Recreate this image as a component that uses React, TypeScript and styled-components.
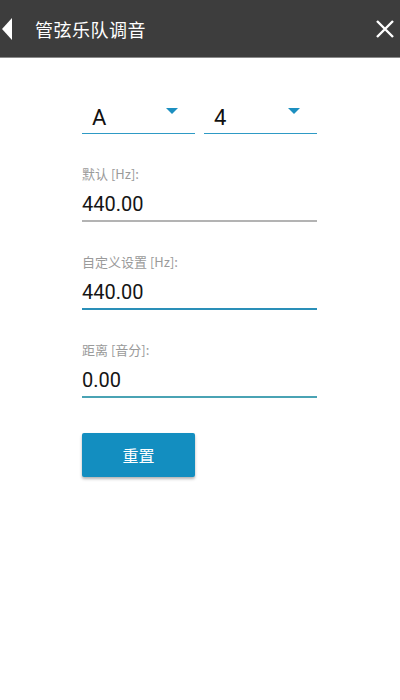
import styled, { createGlobalStyle } from 'styled-components';

const GlobalStyle = createGlobalStyle`
  html, body {
    margin: 0;
    padding: 0;
    background: #fff;
    font-family: Roboto, "Noto Sans CJK SC", sans-serif;
  }
  * {
    box-sizing: border-box;
  }
`;

const Page = styled.div`
  width: 400px;
  height: 700px;
  background: #fff;
`;

const Header = styled.div`
  height: 58px;
  background: #3d3d3d;
  border-bottom: 1px solid #8a8a8a;
  display: flex;
  align-items: center;
`;

const BackButton = styled.div`
  width: 35px;
  height: 58px;
  display: flex;
  align-items: center;
  padding-left: 2px;
`;

const Title = styled.h1`
  margin: 0;
  color: #fff;
  font-size: 18px;
  font-weight: 400;
  font-family: "Noto Sans CJK SC", sans-serif;
  letter-spacing: 0.5px;
  flex: 1;
`;

const CloseButton = styled.div`
  width: 22px;
  height: 58px;
  display: flex;
  align-items: center;
  margin-right: 2px;
`;

const Form = styled.div`
  width: 235px;
  margin: 46px 0 0 82px;
  display: flex;
  flex-direction: column;
`;

const SelectRow = styled.div`
  display: flex;
  gap: 9px;
`;

const Select = styled.div`
  flex: 1;
  height: 30px;
  border-bottom: 1px solid #2e9ac5;
  display: flex;
  justify-content: space-between;
  padding: 0 17px 0 10px;
  span {
    font-size: 22px;
    color: #111;
    line-height: 22px;
    margin-top: 3px;
  }
`;

const Caret = styled.div`
  width: 0;
  height: 0;
  margin-top: 4px;
  border-left: 6px solid transparent;
  border-right: 6px solid transparent;
  border-top: 6px solid #1c8fc0;
`;

const Field = styled.div<{ $line: string }>`
  margin-top: 32px;
  & + & {
    margin-top: 32px;
  }
  label {
    display: block;
    color: #9a9a9a;
    font-size: 13px;
    line-height: 16px;
    font-family: "Noto Sans CJK SC", sans-serif;
  }
  div {
    margin-top: 9px;
    font-size: 20px;
    line-height: 26px;
    color: #151515;
    padding-bottom: 3px;
    border-bottom: 2px solid ${(p) => p.$line};
  }
`;

const ResetButton = styled.button`
  margin-top: 35px;
  width: 113px;
  height: 44px;
  border: none;
  border-radius: 2px;
  background: #138ec0;
  color: #fff;
  font-size: 16px;
  font-family: "Noto Sans CJK SC", sans-serif;
  box-shadow: 0 2px 3px rgba(0, 0, 0, 0.3);
`;

export default function App() {
  return (
    <Page>
      <GlobalStyle />
      <Header>
        <BackButton>
          <svg width='11' height='22' viewBox='0 0 11 22'>
            <polygon points='10,0 10,22 0,11' fill='#fff' />
          </svg>
        </BackButton>
        <Title>管弦乐队调音</Title>
        <CloseButton>
          <svg width='18' height='18' viewBox='0 0 18 18'>
            <path d='M1 1 L17 17 M17 1 L1 17' stroke='#fff' strokeWidth='2.4' />
          </svg>
        </CloseButton>
      </Header>
      <Form>
        <SelectRow>
          <Select>
            <span>A</span>
            <Caret />
          </Select>
          <Select>
            <span>4</span>
            <Caret />
          </Select>
        </SelectRow>
        <Field $line='#b3b3b3'>
          <label>默认 [Hz]:</label>
          <div>440.00</div>
        </Field>
        <Field $line='#2a8fb8'>
          <label>自定义设置 [Hz]:</label>
          <div>440.00</div>
        </Field>
        <Field $line='#4aa3b4'>
          <label>距离 [音分]:</label>
          <div>0.00</div>
        </Field>
        <div>
          <ResetButton>重置</ResetButton>
        </div>
      </Form>
    </Page>
  );
}
